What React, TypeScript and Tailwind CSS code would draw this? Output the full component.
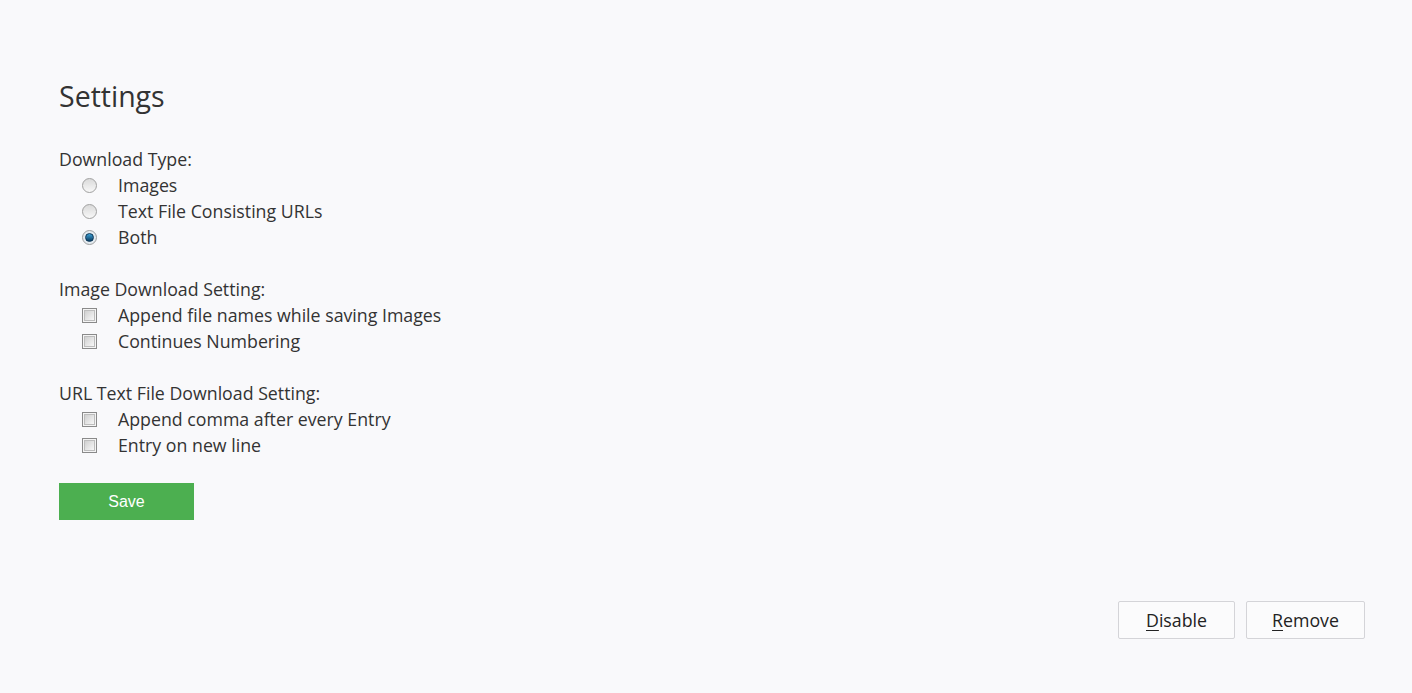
import { useState } from 'react';

function Radio({ checked, label, onClick }: { checked: boolean; label: string; onClick: () => void }) {
  return (
    <label onClick={onClick} className="flex items-center h-[26px] cursor-pointer">
      <span
        className={`w-[15px] h-[15px] rounded-full border border-[#a0a0a0] flex items-center justify-center ${
          checked ? 'bg-[#e4ebf0]' : 'bg-gradient-to-b from-[#dadada] to-[#f8f8f8]'
        }`}
      >
        {checked && <span className="w-[9px] h-[9px] rounded-full bg-gradient-to-b from-[#3ea2d6] to-[#0b3e63] border border-[#0c3556]" />}
      </span>
      <span className="ml-[21px]">{label}</span>
    </label>
  );
}

function Check({ label }: { label: string }) {
  const [on, setOn] = useState(false);
  return (
    <label onClick={() => setOn(!on)} className="flex items-center h-[26px] cursor-pointer">
      <span className="w-[15px] h-[15px] border border-[#8a8a8a] p-[1px] bg-[#f4f4f4] flex">
        <span className="flex-1 border border-[#bdbdbd] bg-gradient-to-br from-[#d0d0d0] to-[#f7f7f7] flex items-center justify-center text-[10px] leading-none text-[#333]">
          {on ? '✓' : ''}
        </span>
      </span>
      <span className="ml-[21px]">{label}</span>
    </label>
  );
}

export default function App() {
  const [tipo, setTipo] = useState('both');

  return (
    <div className="min-h-[693px] bg-[#f9f9fb] text-[#333] flex flex-col" style={{ fontFamily: '"Open Sans", "Noto Sans", sans-serif' }}>
      <main className="pl-[59px] pt-[76px] text-[17.75px] leading-[26px]">
        <h1 className="text-[28.5px] leading-[40px] text-[#333] mb-[30px]">Settings</h1>

        <div className="mb-[26px]">
          <div>Download Type:</div>
          <div className="pl-[23px]">
            <Radio checked={tipo === 'images'} label="Images" onClick={() => setTipo('images')} />
            <Radio checked={tipo === 'text'} label="Text File Consisting URLs" onClick={() => setTipo('text')} />
            <Radio checked={tipo === 'both'} label="Both" onClick={() => setTipo('both')} />
          </div>
        </div>

        <div className="mb-[26px]">
          <div>Image Download Setting:</div>
          <div className="pl-[23px]">
            <Check label="Append file names while saving Images" />
            <Check label="Continues Numbering" />
          </div>
        </div>

        <div>
          <div>URL Text File Download Setting:</div>
          <div className="pl-[23px]">
            <Check label="Append comma after every Entry" />
            <Check label="Entry on new line" />
          </div>
        </div>

        <button className="mt-[25px] w-[135px] h-[37px] bg-[#4caf50] text-white text-[16px]" style={{ fontFamily: '"Liberation Sans", Arial, sans-serif' }}>
          Save
        </button>
      </main>

      <div className="flex justify-end gap-[11px] pr-[47px] mt-[81px]">
        <button className="w-[117px] h-[38px] border border-[#d4d4d8] bg-[#fbfbfc] rounded-[2px] text-[17.75px] text-[#222]">
          <span className="underline underline-offset-[3px]">D</span>isable
        </button>
        <button className="w-[119px] h-[38px] border border-[#d4d4d8] bg-[#fbfbfc] rounded-[2px] text-[17.75px] text-[#222]">
          <span className="underline underline-offset-[3px]">R</span>emove
        </button>
      </div>
    </div>
  );
}
